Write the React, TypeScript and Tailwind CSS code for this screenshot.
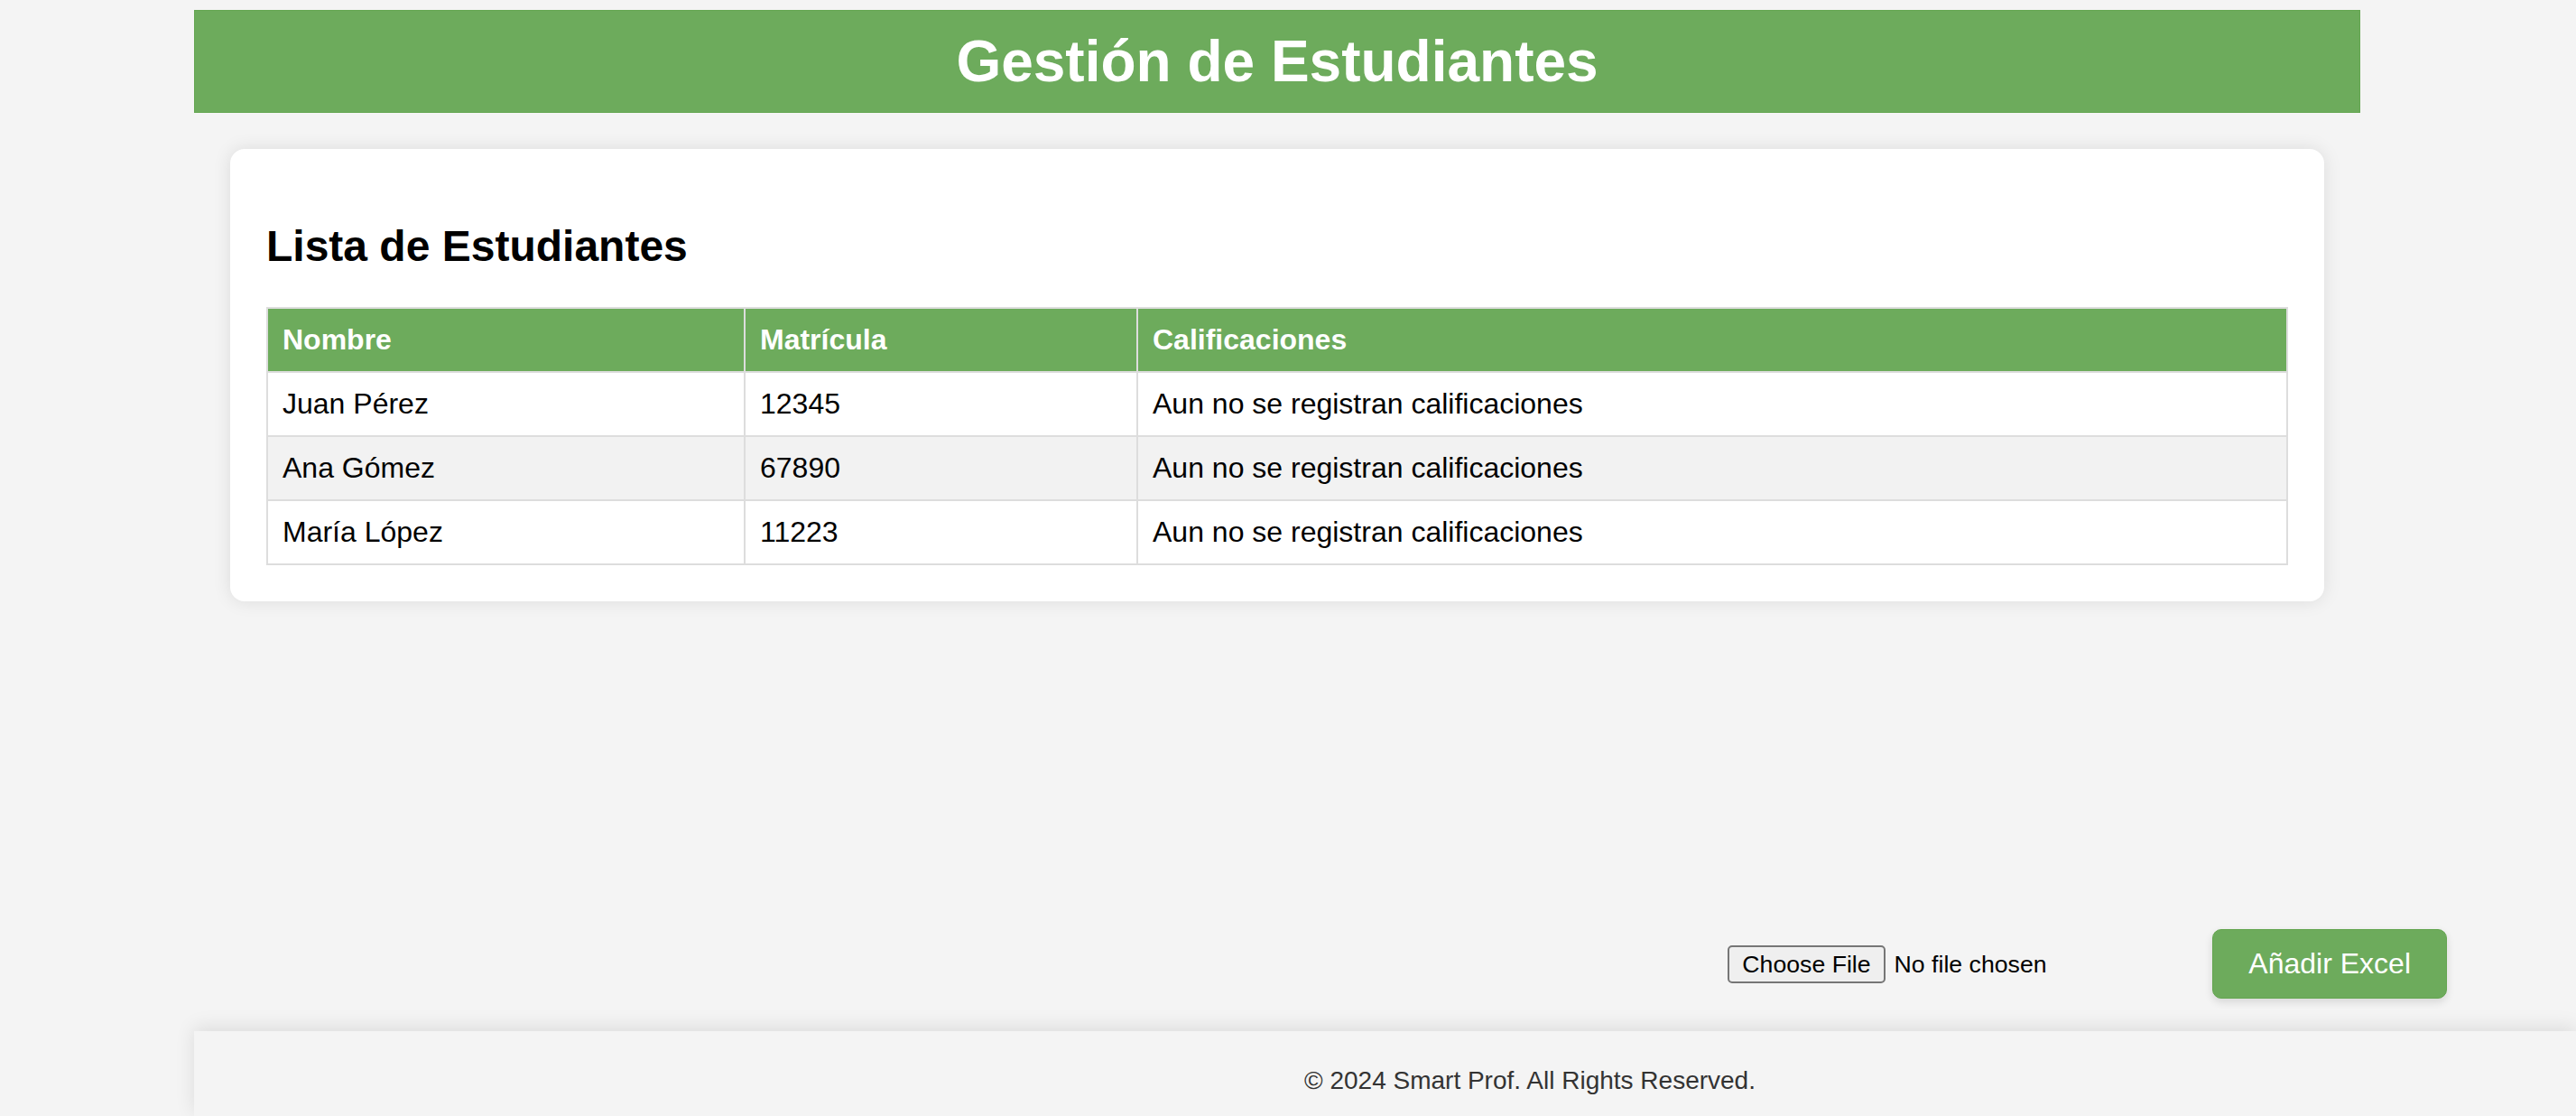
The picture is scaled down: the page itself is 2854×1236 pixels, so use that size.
import React from "react";

const students = [
  { nombre: "Juan Pérez", matricula: "12345" },
  { nombre: "Ana Gómez", matricula: "67890" },
  { nombre: "María López", matricula: "11223" },
];

export default function App() {
  return (
    <div
      className="h-[1236px] w-[2854px] overflow-hidden flex flex-col bg-[#f4f4f4] text-black"
      style={{ fontFamily: '"Liberation Sans", Arial, sans-serif' }}
    >
      <div className="pl-[215px] pt-[11px]">
        <div className="w-[2400px]">
          <header className="h-[114px] bg-[#6dab5c] border border-[#64a651] flex items-center justify-center">
            <h1 className="text-[64px] font-bold text-white leading-[74px]">Gestión de Estudiantes</h1>
          </header>
          <section className="mx-[40px] mt-[40px] bg-white rounded-[16px] shadow-[0_0_20px_rgba(0,0,0,0.1)] px-[40px] pt-[40px] pb-[40px]">
            <h2 className="text-[48px] font-bold leading-[55px] my-[40px]">Lista de Estudiantes</h2>
            <table className="w-[2240px] table-fixed border-collapse text-[32px] leading-[37px]">
              <colgroup>
                <col className="w-[529px]" />
                <col className="w-[435px]" />
                <col />
              </colgroup>
              <thead>
                <tr className="bg-[#6dab5c] text-white">
                  <th className="border-2 border-[#ddd] px-4 py-4 text-left font-bold">Nombre</th>
                  <th className="border-2 border-[#ddd] px-4 py-4 text-left font-bold">Matrícula</th>
                  <th className="border-2 border-[#ddd] px-4 py-4 text-left font-bold">Calificaciones</th>
                </tr>
              </thead>
              <tbody>
                {students.map((s, i) => (
                  <tr key={s.matricula} className={i % 2 === 1 ? "bg-[#f2f2f2]" : "bg-white"}>
                    <td className="border-2 border-[#ddd] px-4 py-4">{s.nombre}</td>
                    <td className="border-2 border-[#ddd] px-4 py-4">{s.matricula}</td>
                    <td className="border-2 border-[#ddd] px-4 py-4">Aun no se registran calificaciones</td>
                  </tr>
                ))}
              </tbody>
            </table>
          </section>
        </div>
      </div>

      <div className="flex-1" />

      <div className="flex justify-end items-center pr-[143px]">
        <div className="w-[537px] flex items-center gap-[10px]">
          <button className="h-[42px] px-[14px] border-2 border-[#767676] rounded-[5px] bg-[#efefef] text-[26.67px] leading-[30px] text-black">
            Choose File
          </button>
          <span className="text-[26.67px] leading-[30px] text-black">No file chosen</span>
        </div>
        <button className="bg-[#6dab5c] border border-[#63a54f] text-white text-[32px] leading-[37px] px-[39px] py-[19px] rounded-[10px] shadow-[0_4px_10px_rgba(0,0,0,0.12)]">
          Añadir Excel
        </button>
      </div>

      <div className="h-[36px]" />

      <footer className="ml-[215px] h-[94px] shrink-0 bg-[#f4f4f4] shadow-[0_-4px_20px_rgba(0,0,0,0.1)] pt-[39px] pl-[1230px]">
        <p className="text-[28px] leading-[32px] text-[#333]">© 2024 Smart Prof. All Rights Reserved.</p>
      </footer>
    </div>
  );
}
